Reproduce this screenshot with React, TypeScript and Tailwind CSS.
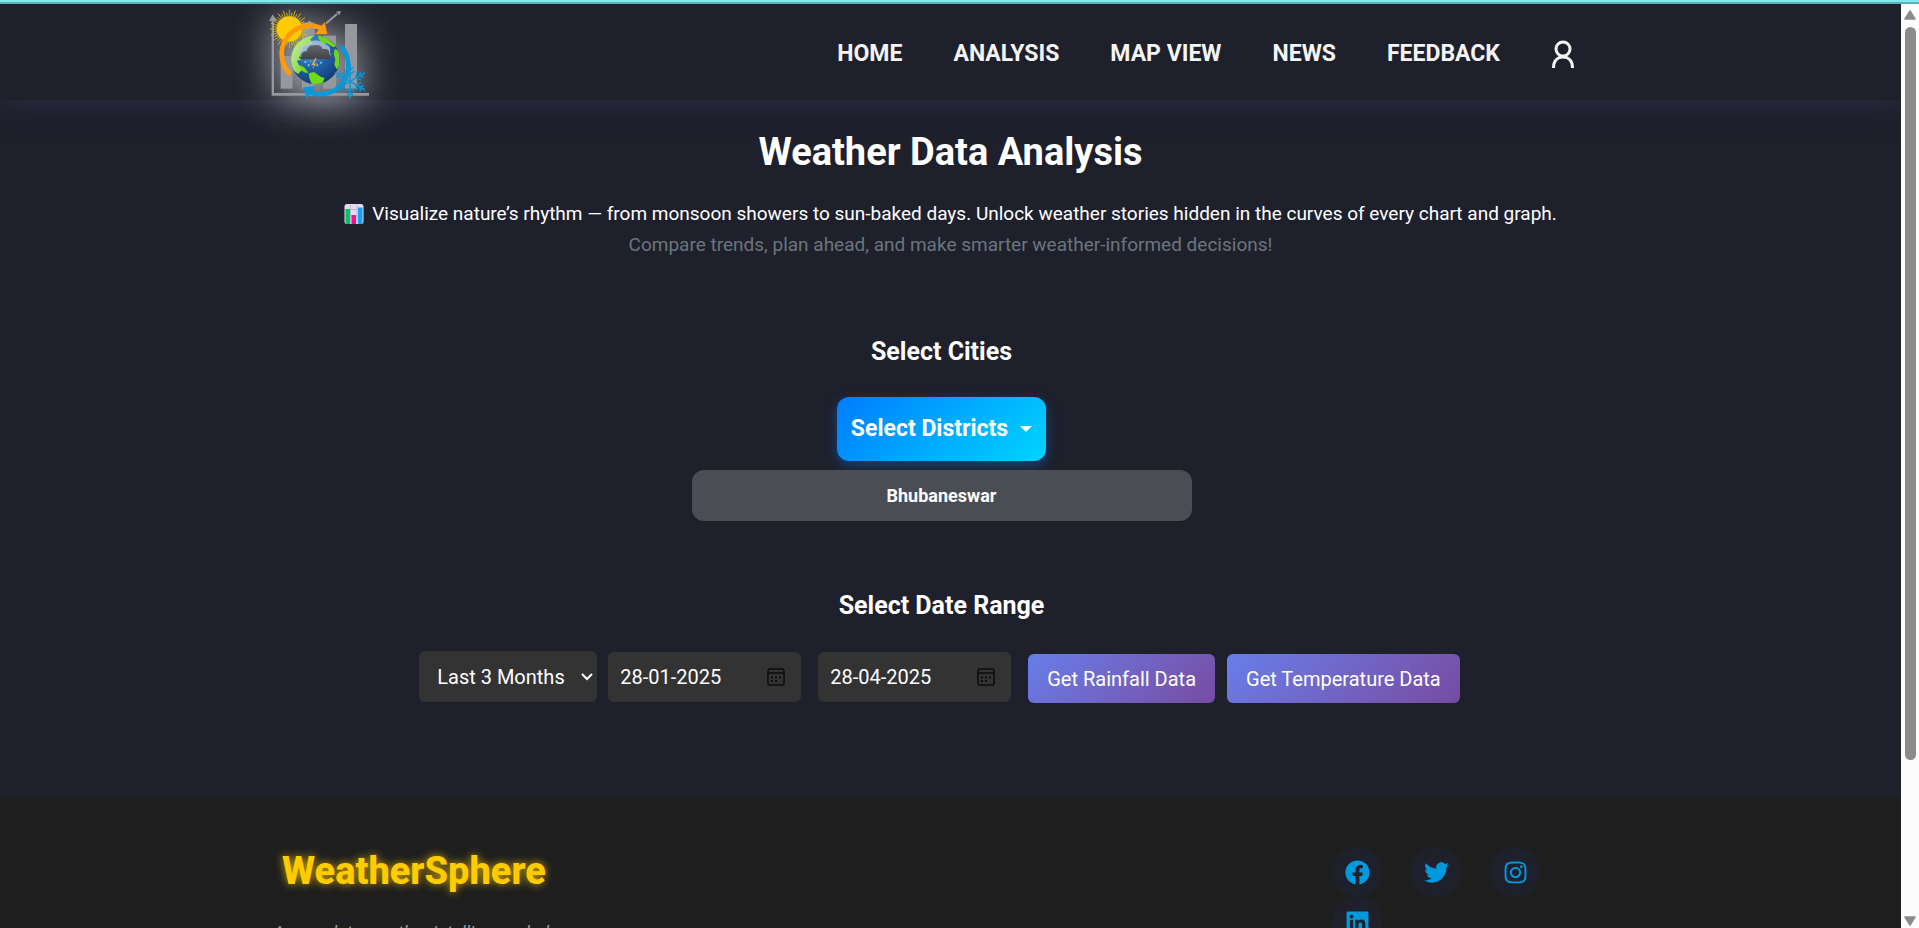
import { useState } from "react";
import { FaFacebook, FaTwitter, FaInstagram, FaLinkedin } from "react-icons/fa";

const navItems = ["HOME", "ANALYSIS", "MAP VIEW", "NEWS", "FEEDBACK"];

const socials = [
  { name: "Facebook", Icon: FaFacebook },
  { name: "Twitter", Icon: FaTwitter },
  { name: "Instagram", Icon: FaInstagram },
  { name: "LinkedIn", Icon: FaLinkedin },
];

const sunRays = Array.from({ length: 40 }, (_, i) => i * 9);
const flakeArms = [0, 60, 120, 180, 240, 300];

function Logo() {
  return (
    <svg
      viewBox="120 24 300 276"
      className="h-[92px] w-[100px] overflow-visible drop-shadow-[0_6px_20px_rgba(255,255,255,0.7)]"
      role="img"
      aria-label="WeatherSphere logo"
    >
      <defs>
        <radialGradient id="ocean" cx="0.4" cy="0.3" r="0.75">
          <stop offset="0" stopColor="#5aa7e0" />
          <stop offset="0.5" stopColor="#1f62a8" />
          <stop offset="1" stopColor="#123a70" />
        </radialGradient>
        <linearGradient id="land" x1="0" y1="0" x2="1" y2="1">
          <stop offset="0" stopColor="#d3f3b0" />
          <stop offset="1" stopColor="#62cf12" />
        </linearGradient>
        <linearGradient id="cloud" x1="0" y1="0" x2="0" y2="1">
          <stop offset="0" stopColor="#63666c" />
          <stop offset="1" stopColor="#3f4247" />
        </linearGradient>
        <clipPath id="globe">
          <circle cx="256" cy="179" r="73" />
        </clipPath>
      </defs>
      <g fill="#97989d">
        <rect x="152" y="168" width="36" height="98" />
        <rect x="216" y="68" width="38" height="198" />
        <rect x="279" y="107" width="39" height="159" />
        <rect x="345" y="72" width="36" height="194" />
        <path d="M125 60h7v219h285v8H125z" />
        <path d="M117 63l11-20 12 20z" />
        <path d="M216 80l22-18 18 12 6 14z" />
        <path d="M286 68l33-28 4 4-33 29zM333 33l-5 13-10-11z" />
      </g>
      <g stroke="#d8bd0c" strokeWidth="2.500">
        {sunRays.map((a, i) => (
          <path
            key={a}
            d={i % 2 ? "M178 48V37" : "M178 48V29"}
            transform={`rotate(${a} 178 87)`}
          />
        ))}
      </g>
      <circle cx="178" cy="87" r="39" fill="#ffcb05" stroke="#b99a10" strokeWidth="2" />
      <circle cx="256" cy="179" r="73" fill="url(#ocean)" />
      <g clipPath="url(#globe)">
        <path
          d="M181 190c-2-40 14-66 40-80l34-4-14 12 6 12-26 10-12 22 8 16-16 4 6 14 14 8 2 10-10-2-8 10-14-10z"
          fill="url(#land)"
        />
        <path d="M262 104l26 8 30 26-8 4-20-12-10 4-14-16z" fill="#6fd41c" />
        <path d="M314 146l14 8 2 40-10 14-7-14 3-16-5-16z" fill="#6fd41c" />
        <path d="M236 220l16-4 20 14 12 4-6 14-14 10-18-4-8-20z" fill="#6fdb10" />
        <path d="M208 194l14 8 14 16-10 0-14-8z" fill="#6fdb10" />
      </g>
      <path
        d="M208 160c-2-18 10-24 22-24 4-18 46-20 50-4 12 0 24 8 20 24l4 12-88 4z"
        fill="#c5cbe0"
        opacity="0.7"
      />
      <path
        d="M214 172c-2-12 6-20 16-18 2-16 14-20 24-18 12-4 22 2 24 12 12-4 22 2 20 14 8 4 6 16-4 16H224c-8 2-18 0-16-10z"
        fill="url(#cloud)"
      />
      <path d="M256 174l-12 22 8-2-6 14 14-18-8 2 8-18z" fill="#f7a93a" />
      <g fill="#8fc9ee">
        <circle cx="226" cy="186" r="3" />
        <circle cx="236" cy="196" r="3" />
        <circle cx="273" cy="188" r="3" />
        <circle cx="262" cy="196" r="3" />
        <circle cx="242" cy="184" r="2" />
      </g>
      <path d="M181 223A85 85 0 0 1 274 84" fill="none" stroke="#ff9a0a" strokeWidth="14" />
      <path d="M284 66l8 36-36 0z" fill="#ff9a0a" />
      <path d="M332 138A86 86 0 0 1 238 277" fill="none" stroke="#0a98d8" strokeWidth="14" />
      <path d="M220 261l37-2-27 37z" fill="#0a98d8" />
      <g stroke="#0a98d8" strokeWidth="4.500" fill="none">
        {flakeArms.map((a) => (
          <path
            key={a}
            d="M360 244V192M360 224l-13-11M360 224l13-11M360 210l-10-8M360 210l10-8"
            transform={`rotate(${a} 360 244)`}
          />
        ))}
      </g>
    </svg>
  );
}

function ProfileIcon() {
  return (
    <svg viewBox="0 0 24 28" className="h-7 w-6" fill="none" stroke="#f5f5f5" strokeWidth="3" aria-hidden="true">
      <circle cx="12" cy="9" r="7" />
      <path d="M2.500 28c0-7 4-11 9.500-11s9.500 4 9.500 11" />
    </svg>
  );
}

function ChartIcon() {
  return (
    <svg viewBox="0 0 20 20" className="mr-2 inline-block size-5 align-[-4px]" aria-hidden="true">
      <rect x="0.500" width="19" height="20" rx="2.500" fill="#e4daf0" />
      <path d="M1 5.500h18M1 12h18M6.500 1v18M13 1v18" stroke="#b9acc9" strokeWidth="0.800" />
      <path d="M1.500 5h4.500v15H3a1.500 1.500 0 0 1-1.500-1.500z" fill="#00c566" />
      <rect x="7.500" y="11" width="4.500" height="9" fill="#f0118c" />
      <path d="M14 3.500h4.500v15A1.500 1.500 0 0 1 17 20h-3z" fill="#15a3ee" />
    </svg>
  );
}

function CalendarIcon() {
  return (
    <svg viewBox="0 0 18 18" className="size-[18px]" fill="none" aria-hidden="true">
      <rect x="1" y="1" width="16" height="16" rx="2" stroke="#0c0c0c" strokeWidth="1.500" />
      <path d="M1 5h16" stroke="#0c0c0c" strokeWidth="1.500" />
      <path d="M4 9.500h2M8 9.500h2M12 9.500h2M4 13h2M8 13h2" stroke="#0c0c0c" strokeWidth="2" />
    </svg>
  );
}

function DateField({ label, initial }: { label: string; initial: string }) {
  const [value, setValue] = useState(initial);
  return (
    <div className="flex h-[50px] w-[193px] items-center rounded-md bg-[#333333] pr-4 pl-3">
      <input
        type="text"
        aria-label={label}
        value={value}
        onChange={(e) => setValue(e.target.value)}
        className="min-w-0 flex-1 bg-transparent text-xl text-white outline-none"
      />
      <button type="button" aria-label={`Open ${label} calendar`}>
        <CalendarIcon />
      </button>
    </div>
  );
}

function ScrollBar() {
  return (
    <div className="flex w-[18px] shrink-0 flex-col items-center bg-[#fcfcfc] pt-1.5 pb-0.5" aria-hidden="true">
      <svg viewBox="0 0 12 10" className="h-2.5 w-3">
        <path d="M6 1l5 8H1z" fill="#8b8b8b" stroke="#8b8b8b" strokeWidth="1.500" strokeLinejoin="round" />
      </svg>
      <div className="mt-[7px] flex min-h-0 w-[11px] flex-1 flex-col">
        <div className="h-33/40 rounded-full bg-[#8b8b8b]" />
      </div>
      <svg viewBox="0 0 12 10" className="h-2.5 w-3">
        <path d="M6 9l5-8H1z" fill="#8b8b8b" stroke="#8b8b8b" strokeWidth="1.500" strokeLinejoin="round" />
      </svg>
    </div>
  );
}

const actionClass =
  "h-[49px] rounded-md bg-linear-135 from-[#667eea] to-[#764ba2] px-[19px] text-xl whitespace-nowrap text-white";

export default function App() {
  return (
    <div className="flex h-screen flex-col overflow-hidden bg-[#1e202c] font-[Roboto,sans-serif] text-white">
      <div className="h-1 shrink-0 border-b-2 border-[#5fb0b5] bg-[#80ebee]" />
      <div className="flex min-h-0 flex-1">
        <div className="min-w-0 flex-1 overflow-hidden">
          <header className="relative flex h-24 items-center justify-between bg-[#1e202c] pt-1 pr-[326px] pl-[270px] shadow-[0_4px_24px_rgba(48,50,72,0.7)]">
            <a href="#home">
              <Logo />
            </a>
            <nav className="flex items-center gap-[51px] text-[23px] font-bold text-[#f5f5f5]">
              {navItems.map((item) => (
                <a key={item} href={`#${item.toLowerCase().replace(" ", "-")}`} className="whitespace-nowrap">
                  {item}
                </a>
              ))}
              <a href="#profile" aria-label="Profile">
                <ProfileIcon />
              </a>
            </nav>
          </header>

          <main className="flex h-[697px] flex-col items-center pt-7">
            <h1 className="text-[38px] leading-[48px] font-bold">Weather Data Analysis</h1>
            <p className="mt-[22px] text-center text-[19px] leading-[31px]">
              <ChartIcon />
              Visualize nature’s rhythm — from monsoon showers to sun-baked days. Unlock weather stories hidden in the
              curves of every chart and graph.
              <br />
              <span className="text-[#6c757d]">
                Compare trends, plan ahead, and make smarter weather-informed decisions!
              </span>
            </p>

            <section className="mt-[76px] flex flex-col items-center pr-[18px]">
              <h2 className="text-[25px] leading-8 font-bold">Select Cities</h2>
              <button
                type="button"
                className="mt-[29px] flex h-16 items-center rounded-xl bg-linear-135 from-[#007bff] to-[#00d4ff] px-3.5 text-[23px] font-bold shadow-[0_4px_12px_rgba(0,123,255,0.4)]"
              >
                Select Districts
                <span className="ml-3 border-x-[6px] border-t-[6px] border-x-transparent border-t-white" />
              </button>
              <div className="mt-[9px] flex h-[51px] w-[500px] items-center justify-center rounded-xl bg-[#4b4d55] text-lg font-bold">
                Bhubaneswar
              </div>
            </section>

            <section className="mt-[69px] flex flex-col items-center pr-[18px]">
              <h2 className="text-[25px] leading-8 font-bold">Select Date Range</h2>
              <div className="mt-[28px] mr-1 flex items-center">
                <div className="relative">
                  <select
                    aria-label="Date range preset"
                    defaultValue="3"
                    className="block h-[51px] w-[178px] appearance-none rounded-md bg-[#333333] pl-[18px] text-xl text-white"
                  >
                    <option value="1">Last Month</option>
                    <option value="3">Last 3 Months</option>
                    <option value="6">Last 6 Months</option>
                  </select>
                  <svg
                    viewBox="0 0 12 8"
                    className="pointer-events-none absolute top-[22px] right-1 h-2 w-3"
                    fill="none"
                    stroke="#ffffff"
                    strokeWidth="2"
                    aria-hidden="true"
                  >
                    <path d="M1 1l5 5 5-5" />
                  </svg>
                </div>
                <div className="ml-[11px] flex gap-[17px]">
                  <DateField label="Start date" initial="28-01-2025" />
                  <DateField label="End date" initial="28-04-2025" />
                </div>
                <div className="ml-[17px] flex gap-3 pt-1">
                  <button type="button" className={actionClass}>
                    Get Rainfall Data
                  </button>
                  <button type="button" className={actionClass}>
                    Get Temperature Data
                  </button>
                </div>
              </div>
            </section>
          </main>

          <footer className="flex items-start justify-between bg-[#1e1e1e] pt-[50px] pr-[361px] pl-[273px]">
            <div className="flex flex-col items-center">
              <h2 className="text-[38px] leading-[48px] font-extrabold text-[#ffcc00] [text-shadow:0_0_8px_rgba(255,204,0,0.8)]">
                WeatherSphere
              </h2>
              <p className="mt-6 text-lg text-[#9a9a9a] italic">A complete weather intelligence hub</p>
            </div>
            <ul className="grid grid-cols-3 gap-x-[29px]">
              {socials.map(({ name, Icon }) => (
                <li key={name}>
                  <a
                    href={`#${name.toLowerCase()}`}
                    aria-label={name}
                    className="flex size-[50px] items-center justify-center rounded-full bg-[#1e202c] text-[#0099dd]"
                  >
                    <Icon className="size-[25px]" />
                  </a>
                </li>
              ))}
            </ul>
          </footer>
        </div>
        <ScrollBar />
      </div>
    </div>
  );
}
